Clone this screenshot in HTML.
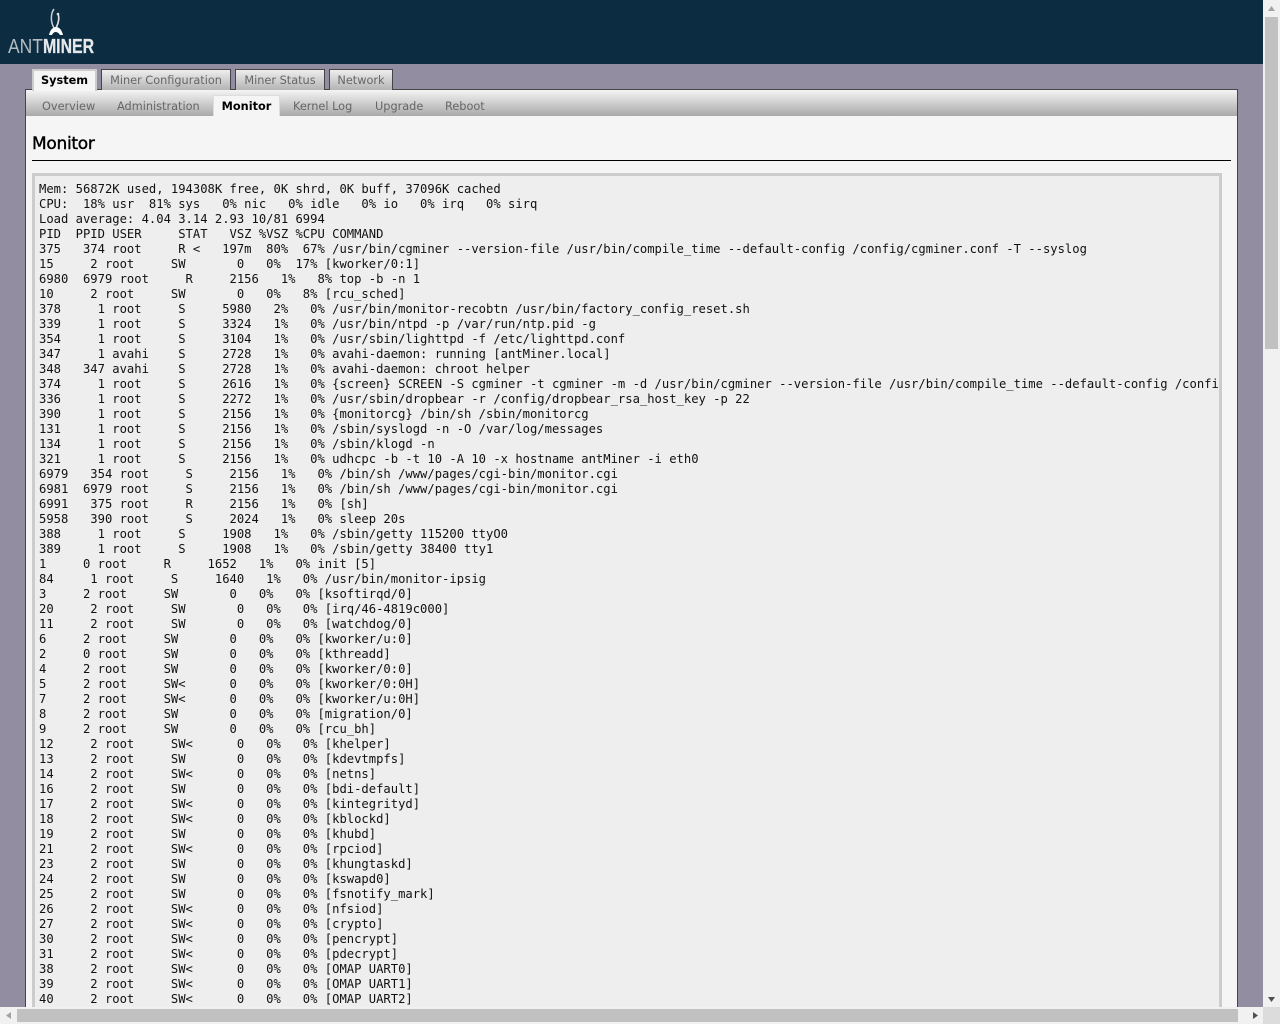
<!DOCTYPE html>
<html><head><meta charset="utf-8"><title>Monitor</title>
<style>
html,body{margin:0;padding:0;width:1280px;height:1024px;overflow:hidden;background:#928da1;}
*{box-sizing:border-box}
.a{position:absolute}
#hdr{left:0;top:0;width:1264px;height:64px;background:#0c2c42}
.tab{position:absolute;top:69px;height:21px;border:1px solid #444;border-bottom:none;background:linear-gradient(#eee,#b4b4b4);font:11.3px/22px "DejaVu Sans",sans-serif;color:#666;text-align:center;}
.tab.on{background:#f5f5f5;border:2px solid #ccc;border-bottom:none;color:#000;font-weight:bold;line-height:20px;height:22px;z-index:3}
#box{left:25px;top:89px;width:1213px;height:935px;border:1px solid #444;border-bottom:none;background:#f5f5f5}
#sub{left:26px;top:90px;width:1211px;height:26px;background:linear-gradient(#f4f4f4,#a9a9a9)}
.st{position:absolute;top:100px;font:11.3px/13px "DejaVu Sans",sans-serif;color:#666;white-space:nowrap}
#act{left:213px;top:95px;width:67px;height:21px;background:#f5f5f5;border:1px solid #ddd;border-bottom:none;font:bold 11.3px/21px "DejaVu Sans",sans-serif;color:#000;text-align:center}
h2{position:absolute;left:32px;top:133px;margin:0;font:17px/22px "DejaVu Sans",sans-serif;color:#000;-webkit-text-stroke:.4px #000;letter-spacing:-.3px}
#rule{left:32px;top:160px;width:1199px;height:1px;background:#000}
#pre{left:32px;top:173px;width:1190px;height:851px;background:#eee;border:3px solid #ccc;border-bottom:none;overflow:hidden}
pre{position:absolute;left:4px;top:6px;margin:0;font:12.18px/15px "DejaVu Sans Mono",monospace;color:#111;white-space:pre}
#vs{left:1263px;top:0;width:17px;height:1024px;background:#f1f1f1}
#vt{left:1265px;top:17px;width:13px;height:332px;background:#c1c1c1}
#hs{left:0;top:1007px;width:1263px;height:17px;background:#f1f1f1}
#ht{left:17px;top:1009px;width:1221px;height:13px;background:#c1c1c1}
#cn{left:1263px;top:1007px;width:17px;height:17px;background:#dcdcdc}
</style></head><body>
<div class="a" id="hdr">
<svg width="110" height="64" style="position:absolute;left:0;top:0">
<path d="M54 9C51 13 50 21 54 28" fill="none" stroke="#c8cfd4" stroke-width="1.500"/>
<path d="M58 14C60 19 58 24 56 28" fill="none" stroke="#dfe3e6" stroke-width="1.600"/>
<circle cx="58" cy="14" r="1.300" fill="#dfe3e6"/>
<path d="M49 35C50 30 53 27 56 27C60 27 62 31 63 35L60 35C59 33 57 32 56 32C54 32 53 33 52 35Z" fill="#fff"/>
<text x="8" y="53" font-family="Liberation Sans" font-size="20" fill="#b4bcc3" textLength="35" lengthAdjust="spacingAndGlyphs">ANT</text>
<text x="43" y="53" font-family="Liberation Sans" font-size="20" font-weight="bold" fill="#e6e8ea" stroke="#e6e8ea" stroke-width=".3" textLength="51" lengthAdjust="spacingAndGlyphs">MINER</text>
</svg>
</div>
<div class="a" id="box"></div>
<div class="a" id="sub"></div>
<div class="tab on" style="left:32px;width:65px">System</div>
<div class="tab" style="left:101px;width:130px">Miner Configuration</div>
<div class="tab" style="left:235px;width:90px">Miner Status</div>
<div class="tab" style="left:329px;width:64px">Network</div>
<div class="st" style="left:42px">Overview</div>
<div class="st" style="left:117px">Administration</div>
<div class="a" id="act">Monitor</div>
<div class="st" style="left:293px">Kernel Log</div>
<div class="st" style="left:375px">Upgrade</div>
<div class="st" style="left:445px">Reboot</div>
<h2>Monitor</h2>
<div class="a" id="rule"></div>
<div class="a" id="pre"><pre>Mem: 56872K used, 194308K free, 0K shrd, 0K buff, 37096K cached
CPU:  18% usr  81% sys   0% nic   0% idle   0% io   0% irq   0% sirq
Load average: 4.04 3.14 2.93 10/81 6994
PID  PPID USER     STAT   VSZ %VSZ %CPU COMMAND
375   374 root     R &lt;   197m  80%  67% /usr/bin/cgminer --version-file /usr/bin/compile_time --default-config /config/cgminer.conf -T --syslog
15     2 root     SW       0   0%  17% [kworker/0:1]
6980  6979 root     R     2156   1%   8% top -b -n 1
10     2 root     SW       0   0%   8% [rcu_sched]
378     1 root     S     5980   2%   0% /usr/bin/monitor-recobtn /usr/bin/factory_config_reset.sh
339     1 root     S     3324   1%   0% /usr/bin/ntpd -p /var/run/ntp.pid -g
354     1 root     S     3104   1%   0% /usr/sbin/lighttpd -f /etc/lighttpd.conf
347     1 avahi    S     2728   1%   0% avahi-daemon: running [antMiner.local]
348   347 avahi    S     2728   1%   0% avahi-daemon: chroot helper
374     1 root     S     2616   1%   0% {screen} SCREEN -S cgminer -t cgminer -m -d /usr/bin/cgminer --version-file /usr/bin/compile_time --default-config /config/cgminer.conf
336     1 root     S     2272   1%   0% /usr/sbin/dropbear -r /config/dropbear_rsa_host_key -p 22
390     1 root     S     2156   1%   0% {monitorcg} /bin/sh /sbin/monitorcg
131     1 root     S     2156   1%   0% /sbin/syslogd -n -O /var/log/messages
134     1 root     S     2156   1%   0% /sbin/klogd -n
321     1 root     S     2156   1%   0% udhcpc -b -t 10 -A 10 -x hostname antMiner -i eth0
6979   354 root     S     2156   1%   0% /bin/sh /www/pages/cgi-bin/monitor.cgi
6981  6979 root     S     2156   1%   0% /bin/sh /www/pages/cgi-bin/monitor.cgi
6991   375 root     R     2156   1%   0% [sh]
5958   390 root     S     2024   1%   0% sleep 20s
388     1 root     S     1908   1%   0% /sbin/getty 115200 ttyO0
389     1 root     S     1908   1%   0% /sbin/getty 38400 tty1
1     0 root     R     1652   1%   0% init [5]
84     1 root     S     1640   1%   0% /usr/bin/monitor-ipsig
3     2 root     SW       0   0%   0% [ksoftirqd/0]
20     2 root     SW       0   0%   0% [irq/46-4819c000]
11     2 root     SW       0   0%   0% [watchdog/0]
6     2 root     SW       0   0%   0% [kworker/u:0]
2     0 root     SW       0   0%   0% [kthreadd]
4     2 root     SW       0   0%   0% [kworker/0:0]
5     2 root     SW&lt;      0   0%   0% [kworker/0:0H]
7     2 root     SW&lt;      0   0%   0% [kworker/u:0H]
8     2 root     SW       0   0%   0% [migration/0]
9     2 root     SW       0   0%   0% [rcu_bh]
12     2 root     SW&lt;      0   0%   0% [khelper]
13     2 root     SW       0   0%   0% [kdevtmpfs]
14     2 root     SW&lt;      0   0%   0% [netns]
16     2 root     SW       0   0%   0% [bdi-default]
17     2 root     SW&lt;      0   0%   0% [kintegrityd]
18     2 root     SW&lt;      0   0%   0% [kblockd]
19     2 root     SW       0   0%   0% [khubd]
21     2 root     SW&lt;      0   0%   0% [rpciod]
23     2 root     SW       0   0%   0% [khungtaskd]
24     2 root     SW       0   0%   0% [kswapd0]
25     2 root     SW       0   0%   0% [fsnotify_mark]
26     2 root     SW&lt;      0   0%   0% [nfsiod]
27     2 root     SW&lt;      0   0%   0% [crypto]
30     2 root     SW&lt;      0   0%   0% [pencrypt]
31     2 root     SW&lt;      0   0%   0% [pdecrypt]
38     2 root     SW&lt;      0   0%   0% [OMAP UART0]
39     2 root     SW&lt;      0   0%   0% [OMAP UART1]
40     2 root     SW&lt;      0   0%   0% [OMAP UART2]</pre></div>
<div class="a" id="vs"></div>
<div class="a" id="vt"></div>
<div class="a" id="hs"></div>
<div class="a" id="ht"></div>
<div class="a" id="cn"></div>
<svg class="a" style="left:0;top:0;pointer-events:none" width="1280" height="1024">
<path d="M1268 11L1275 11L1271.500 6Z" fill="#a3a3a3"/>
<path d="M1268 997L1275 997L1271.500 1002Z" fill="#505050"/>
<path d="M11 1012L11 1019L6 1015.500Z" fill="#a3a3a3"/>
<path d="M1253 1012L1253 1019L1258 1015.500Z" fill="#505050"/>
</svg>
</body></html>
